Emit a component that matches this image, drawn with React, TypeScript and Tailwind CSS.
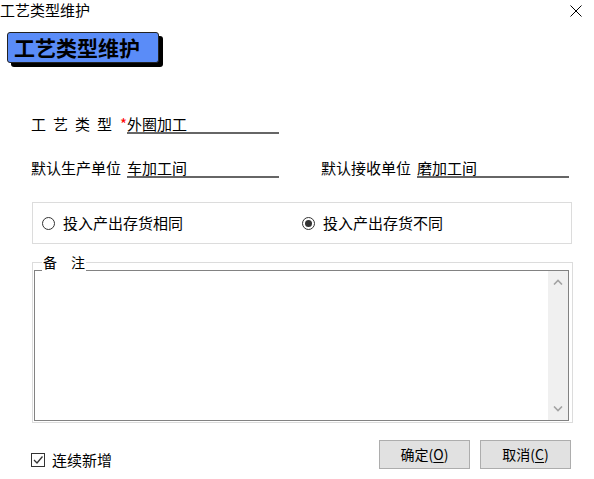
import React from "react";

const font = { fontFamily: '"Noto Sans CJK SC", "Noto Sans", sans-serif' };

function Radio({ checked }: { checked?: boolean }) {
  return (
    <span className="w-[13px] h-[13px] rounded-full border border-[#333] bg-white flex items-center justify-center shrink-0">
      {checked && <span className="w-[7px] h-[7px] rounded-full bg-[#333]" />}
    </span>
  );
}

export default function App() {
  return (
    <div
      className="w-[594px] h-[479px] bg-white overflow-hidden flex flex-col text-[#000]"
      style={font}
    >
      {/* title bar */}
      <div className="h-[20px] flex items-start justify-between">
        <span className="text-[15px] leading-[19px]">工艺类型维护</span>
        <svg className="mt-[5px] mr-[12px]" width="12" height="12" viewBox="0 0 12 12">
          <path d="M0.5 0.5 L11.5 11.5 M11.5 0.5 L0.5 11.5" stroke="#000" strokeWidth="1" />
        </svg>
      </div>

      {/* badge */}
      <div className="ml-[7px] mt-[12px] w-[152px] h-[31px] bg-[#5a8cf8] border border-[#222] rounded-[3px] shadow-[4px_4px_0_#000] flex items-center pl-[6px]">
        <span className="text-[21px] font-bold leading-none">工艺类型维护</span>
      </div>

      {/* row 1 */}
      <div className="mt-[51px] h-[20px] flex items-stretch pl-[31px] text-[15px] leading-[20px]">
        <span className="w-[89px] tracking-[7px]">工艺类型</span>
        <span className="w-[7px] text-[#ff0000]">*</span>
        <span className="w-[152px] border-b-2 border-[#666]">外圈加工</span>
      </div>

      {/* row 2 */}
      <div className="mt-[24px] h-[20px] flex items-stretch pl-[31px] text-[15px] leading-[20px]">
        <span className="w-[96px]">默认生产单位</span>
        <span className="w-[152px] border-b-2 border-[#666]">车加工间</span>
        <span className="w-[42px]" />
        <span className="w-[96px]">默认接收单位</span>
        <span className="w-[152px] border-b-2 border-[#666]">磨加工间</span>
      </div>

      {/* radio box */}
      <div className="mt-[24px] ml-[32px] w-[540px] h-[42px] border border-[#dcdcdc] flex items-center text-[15px]">
        <div className="w-[269px] pl-[9px] flex items-center gap-[8px]">
          <Radio />
          <span>投入产出存货相同</span>
        </div>
        <div className="flex items-center gap-[8px]">
          <Radio checked />
          <span>投入产出存货不同</span>
        </div>
      </div>

      {/* notes group */}
      <div className="mt-[18px] ml-[32px] w-[541px] h-[161px] border border-[#dcdcdc] relative">
        <span className="absolute -top-[10px] left-[9px] bg-white text-[14px] leading-[18px] px-[1px] flex gap-[14px]">
          <span>备</span>
          <span>注</span>
        </span>
        <div className="mt-[7px] ml-[1px] w-[535px] h-[151px] border border-[#828282] bg-white flex justify-end">
          <div className="w-[20px] h-full bg-[#f0f0f0] flex flex-col items-center justify-between py-[8px]">
            <svg width="10" height="6" viewBox="0 0 10 6">
              <path d="M1 5.5 L5 1.5 L9 5.5" stroke="#a3a3a3" strokeWidth="1.6" fill="none" />
            </svg>
            <svg width="10" height="6" viewBox="0 0 10 6">
              <path d="M1 0.5 L5 4.5 L9 0.5" stroke="#a3a3a3" strokeWidth="1.6" fill="none" />
            </svg>
          </div>
        </div>
      </div>

      {/* bottom */}
      <div className="mt-[17px] flex items-start">
        <div className="ml-[31px] mt-[12px] flex items-center gap-[7px] text-[15px] leading-[16px]">
          <span className="w-[14px] h-[14px] border border-[#333] bg-white flex items-center justify-center">
            <svg width="10" height="10" viewBox="0 0 10 10">
              <path d="M1 5 L4 8 L9.5 1.5" stroke="#333" strokeWidth="1.3" fill="none" />
            </svg>
          </span>
          <span>连续新增</span>
        </div>
        <div className="ml-auto mr-[23px] flex gap-[10px]">
          <button className="w-[91px] h-[29px] bg-[#e1e1e1] border border-[#adadad] text-[14px] flex items-center justify-center">
            确定(<span className="underline underline-offset-2">O</span>)
          </button>
          <button className="w-[91px] h-[29px] bg-[#e1e1e1] border border-[#adadad] text-[14px] flex items-center justify-center">
            取消(<span className="underline underline-offset-2">C</span>)
          </button>
        </div>
      </div>
    </div>
  );
}
